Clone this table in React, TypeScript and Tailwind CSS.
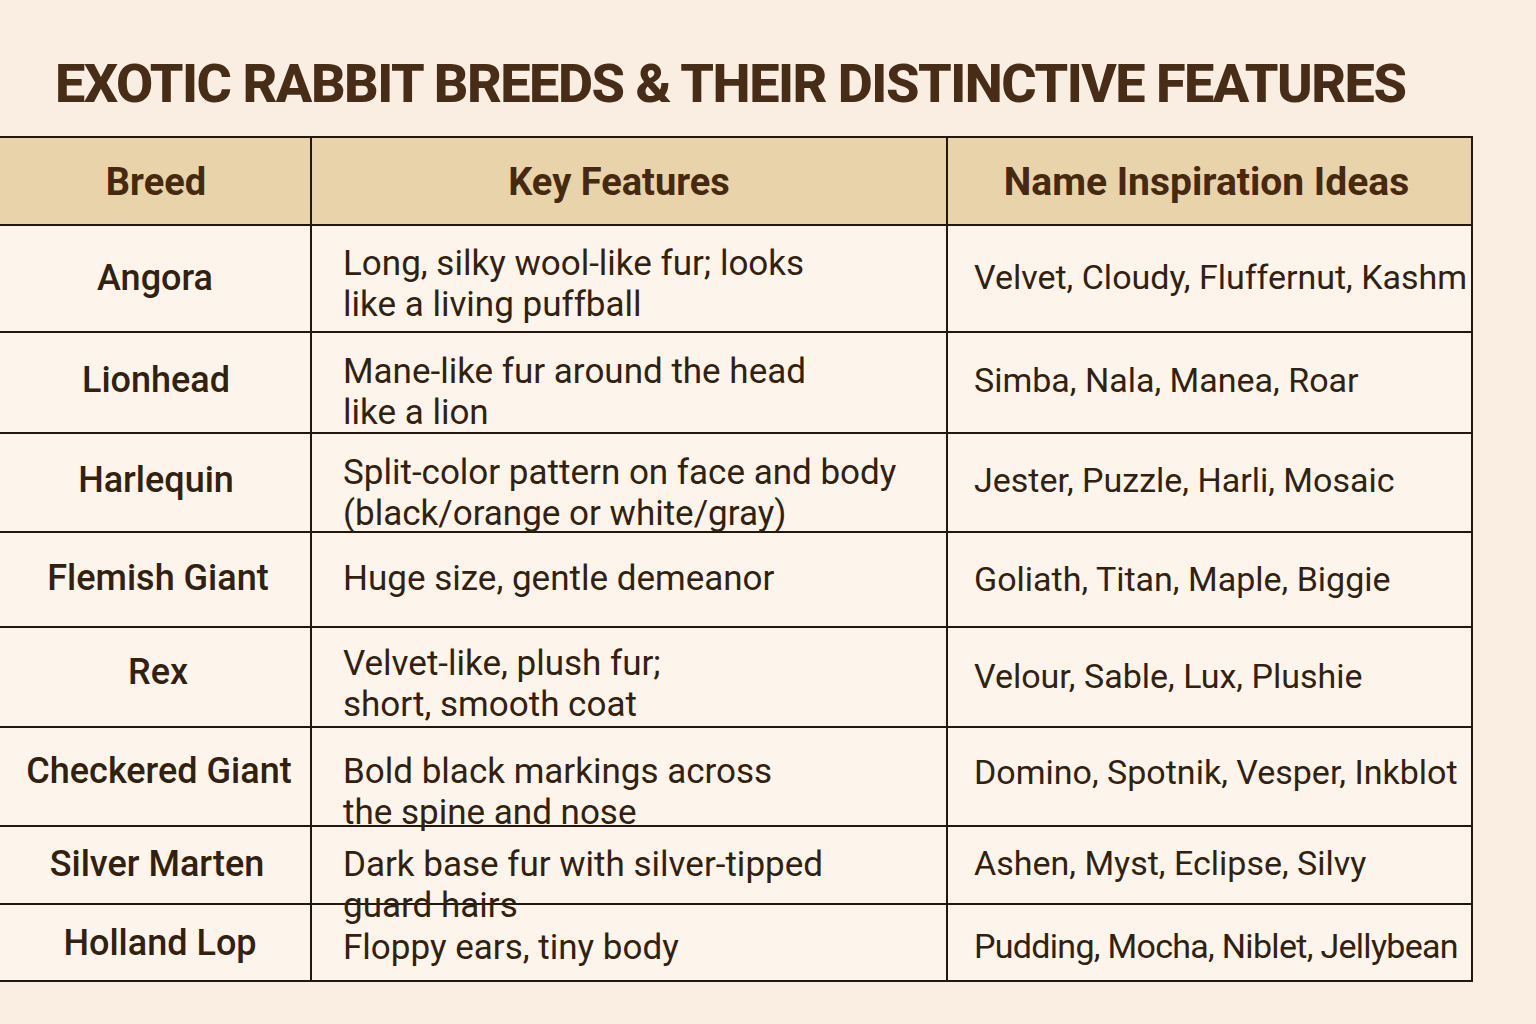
import React from 'react';

// ─── Data ─────────────────────────────────────────────
type Row = {
  breed: string;
  features: string[];
  names: string;
  h: string;
  bPt: string;
  fPt: string;
  nPt: string;
};

const rows: Row[] = [
  { breed: 'Angora', features: ['Long, silky wool-like fur; looks', 'like a living puffball'], names: 'Velvet, Cloudy, Fluffernut, Kashm', h: 'h-[107px]', bPt: 'pt-[32px] pl-[0px]', fPt: 'pt-[17px]', nPt: 'pt-[31px]' },
  { breed: 'Lionhead', features: ['Mane-like fur around the head', 'like a lion'], names: 'Simba, Nala, Manea, Roar', h: 'h-[101px]', bPt: 'pt-[27px] pl-[2px]', fPt: 'pt-[18px]', nPt: 'pt-[27px]' },
  { breed: 'Harlequin', features: ['Split-color pattern on face and body', '(black/orange or white/gray)'], names: 'Jester, Puzzle, Harli, Mosaic', h: 'h-[99px]', bPt: 'pt-[26px] pl-[2px]', fPt: 'pt-[18px]', nPt: 'pt-[26px]' },
  { breed: 'Flemish Giant', features: ['Huge size, gentle demeanor'], names: 'Goliath, Titan, Maple, Biggie', h: 'h-[95px]', bPt: 'pt-[25px] pl-[6px]', fPt: 'pt-[25px]', nPt: 'pt-[26px]' },
  { breed: 'Rex', features: ['Velvet-like, plush fur;', 'short, smooth coat'], names: 'Velour, Sable, Lux, Plushie', h: 'h-[100px]', bPt: 'pt-[24px] pl-[6px]', fPt: 'pt-[15px]', nPt: 'pt-[28px]' },
  { breed: 'Checkered Giant', features: ['Bold black markings across', 'the spine and nose'], names: 'Domino, Spotnik, Vesper, Inkblot', h: 'h-[99px]', bPt: 'pt-[23px] pl-[8px]', fPt: 'pt-[23px]', nPt: 'pt-[24px]' },
  { breed: 'Silver Marten', features: ['Dark base fur with silver-tipped', 'guard hairs'], names: 'Ashen, Myst, Eclipse, Silvy', h: 'h-[78px]', bPt: 'pt-[17px] pl-[4px]', fPt: 'pt-[17px]', nPt: 'pt-[16px]' },
  { breed: 'Holland Lop', features: ['Floppy ears, tiny body'], names: 'Pudding, Mocha, Niblet, Jellybean', h: 'h-[77px]', bPt: 'pt-[18px] pl-[10px]', fPt: 'pt-[22px]', nPt: 'pt-[21px] tracking-[-0.7px]' },
];

// ─── Page ─────────────────────────────────────────────
export default function App() {
  return (
    <div
      className="w-full h-[1024px] overflow-hidden bg-[#f9eee1] text-[#33210f] [font-stretch:90%]"
      style={{ fontFamily: 'Roboto, "Liberation Sans", sans-serif' }}
    >
      {/* Title */}
      <h1 className="pl-[55px] pt-[56px] text-[54px] leading-[56px] font-extrabold tracking-[-1.5px] text-[#472d18] whitespace-nowrap">
        EXOTIC RABBIT BREEDS &amp; THEIR DISTINCTIVE FEATURES
      </h1>

      {/* Table */}
      <div className="mt-[24px] w-[1473px] border-t-2 border-r-2 border-[#24170d] bg-[#fdf5eb]">
        {/* Header */}
        <div className="flex h-[88px] border-b-2 border-[#24170d] bg-[#e9d3ab] text-[#46290f] font-bold text-[38px] leading-[41px]">
          <div className="w-[312px] shrink-0 border-r-2 border-[#24170d] flex items-center justify-center pt-[3px] pl-[2px]">Breed</div>
          <div className="w-[636px] shrink-0 border-r-2 border-[#24170d] flex items-center justify-center pt-[3px] pr-[20px]">Key Features</div>
          <div className="flex-1 flex items-center justify-center pt-[3px] pr-[6px] text-[39px]">Name Inspiration Ideas</div>
        </div>

        {/* Body */}
        {rows.map(r => (
          <div key={r.breed} className={`flex border-b-2 border-[#24170d] ${r.h}`}>
            <div className={`w-[312px] shrink-0 border-r-2 border-[#24170d] text-center text-[36px] leading-[41px] font-medium whitespace-nowrap ${r.bPt}`}>
              {r.breed}
            </div>
            <div className={`w-[636px] shrink-0 border-r-2 border-[#24170d] pl-[31px] text-[35px] leading-[41px] whitespace-nowrap ${r.fPt}`}>
              {r.features.map(f => (
                <div key={f}>{f}</div>
              ))}
            </div>
            <div className={`flex-1 min-w-0 overflow-hidden pl-[26px] text-[34px] leading-[41px] whitespace-nowrap ${r.nPt}`}>
              {r.names}
            </div>
          </div>
        ))}
      </div>
    </div>
  );
}
